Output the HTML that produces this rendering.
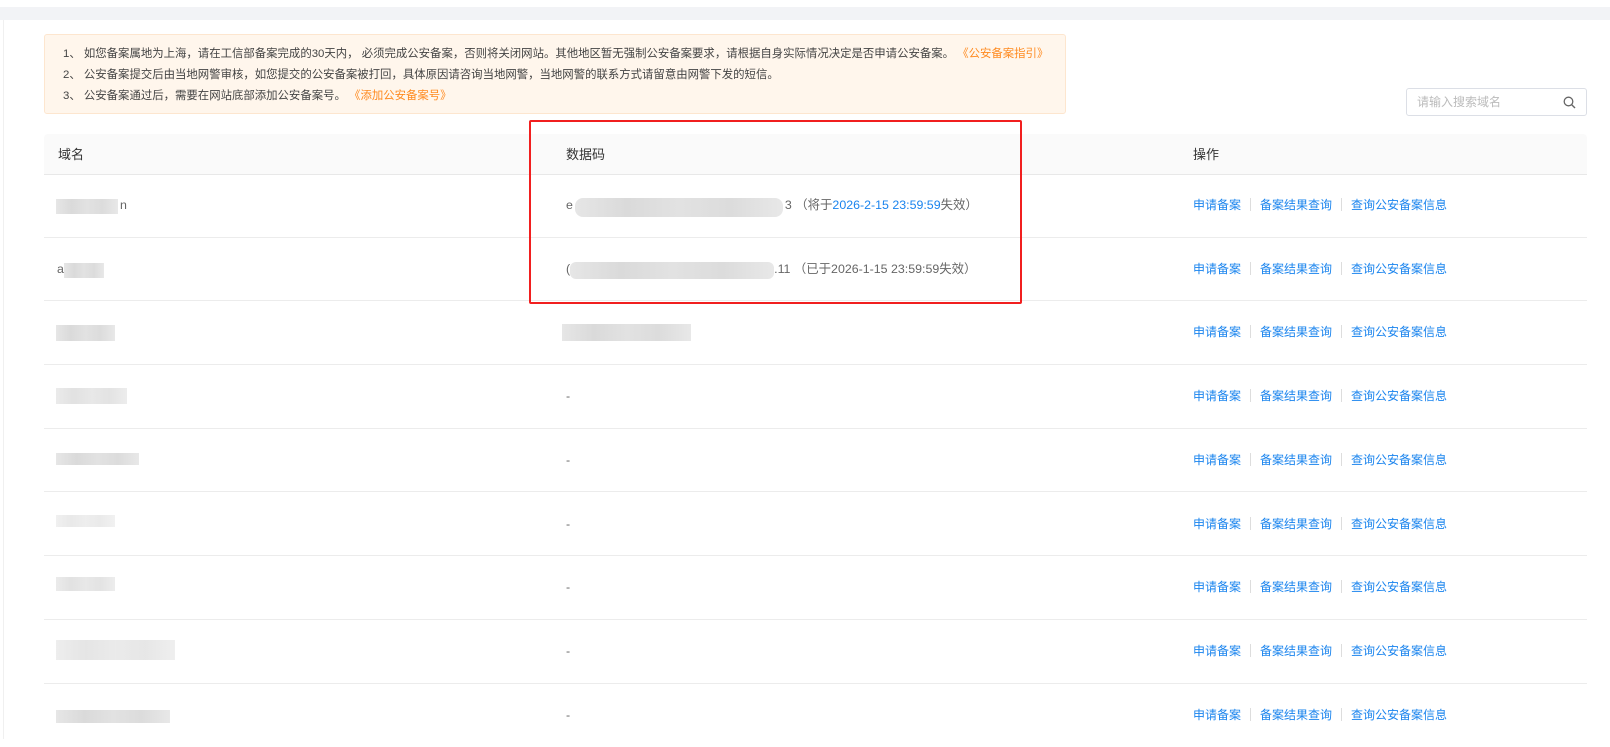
<!DOCTYPE html>
<html><head><meta charset="utf-8"><style>
*{margin:0;padding:0;box-sizing:border-box}
body{width:1610px;height:739px;overflow:hidden;background:#fff;font-family:"Liberation Sans","Noto Sans CJK SC",sans-serif;font-size:12px;color:#555;position:relative}
.band{position:absolute;left:0;top:7px;width:1610px;height:13px;background:#f2f3f6}
.card{position:absolute;left:3px;top:20px;width:1607px;height:719px;background:#fff;border-left:1px solid #f0f0f0}
.notice{position:absolute;left:44px;top:34px;width:1022px;height:80px;background:#fff6ec;border:1px solid #fde6cf;border-radius:3px;padding:9px 0 0 18px;line-height:21px;color:#444;font-size:11.4px;white-space:nowrap}
.notice b{font-weight:normal;color:#ff8a1f}
.search{position:absolute;left:1406px;top:88px;width:181px;height:28px;border:1px solid #dcdfe6;border-radius:3px;color:#bbb;padding-left:10px;line-height:26px}
.search svg{position:absolute;right:10px;top:7px}
.head{position:absolute;left:44px;top:134px;width:1543px;height:41px;background:#fafafa;border-bottom:1px solid #e8e8e8;border-radius:4px 4px 0 0;color:#333;font-size:13px}
.head span,.row>span{position:absolute;white-space:nowrap}
.row{position:absolute;left:44px;width:1543px;height:63.7px;border-bottom:1px solid #ececec}
.row .t{top:0;line-height:63px;color:#666;font-size:12.4px}
.ops{left:1149px;top:0;line-height:63px;color:#1a84ee}
.ops i{display:inline-block;width:1px;height:13px;background:#ddd;margin:0 9px;vertical-align:-2px}
.blur{position:absolute;background:linear-gradient(90deg,#e6e6e6,#dadada,#e2e2e2,#dcdcdc,#e8e8e8);height:15px}
.red{position:absolute;left:529px;top:120px;width:493px;height:184px;border:2px solid #f11f1f;border-radius:2px}
.blue{color:#1a84ee}
</style></head><body>
<div class="band"></div>
<div class="card"></div>
<div class="notice">
<div>1、 如您备案属地为上海，请在工信部备案完成的30天内， 必须完成公安备案，否则将关闭网站。其他地区暂无强制公安备案要求，请根据自身实际情况决定是否申请公安备案。 <b>《公安备案指引》</b></div>
<div>2、 公安备案提交后由当地网警审核，如您提交的公安备案被打回，具体原因请咨询当地网警，当地网警的联系方式请留意由网警下发的短信。</div>
<div>3、 公安备案通过后，需要在网站底部添加公安备案号。 <b>《添加公安备案号》</b></div>
</div>
<div class="search">请输入搜索域名<svg width="13" height="13" viewBox="0 0 13 13"><circle cx="5.5" cy="5.5" r="4.3" fill="none" stroke="#666" stroke-width="1.3"/><path d="M8.6 8.6L12 12" stroke="#666" stroke-width="1.4"/></svg></div>
<div class="head"><span style="left:14px;top:0;line-height:41px">域名</span><span style="left:522px;line-height:41px">数据码</span><span style="left:1149px;line-height:41px">操作</span></div>

<div class="row" style="top:174px"><span class="t" style="left:76px">n</span><span class="t" style="left:522px">e<span style="display:inline-block;width:212px"></span>3 （将于<span class="blue">2026-2-15 23:59:59</span>失效）</span><span class="ops">申请备案<i></i>备案结果查询<i></i>查询公安备案信息</span></div>
<div class="row" style="top:237.7px"><span class="t" style="left:13px">a</span><span class="t" style="left:522px">(<span style="display:inline-block;width:204px"></span>.11 （已于2026-1-15 23:59:59失效）</span><span class="ops">申请备案<i></i>备案结果查询<i></i>查询公安备案信息</span></div>
<div class="row" style="top:301.4px"><span class="ops">申请备案<i></i>备案结果查询<i></i>查询公安备案信息</span></div>
<div class="row" style="top:365.1px"><span class="t" style="left:522px">-</span><span class="ops">申请备案<i></i>备案结果查询<i></i>查询公安备案信息</span></div>
<div class="row" style="top:428.8px"><span class="t" style="left:522px">-</span><span class="ops">申请备案<i></i>备案结果查询<i></i>查询公安备案信息</span></div>
<div class="row" style="top:492.5px"><span class="t" style="left:522px">-</span><span class="ops">申请备案<i></i>备案结果查询<i></i>查询公安备案信息</span></div>
<div class="row" style="top:556.2px"><span class="t" style="left:522px">-</span><span class="ops">申请备案<i></i>备案结果查询<i></i>查询公安备案信息</span></div>
<div class="row" style="top:619.9px"><span class="t" style="left:522px">-</span><span class="ops">申请备案<i></i>备案结果查询<i></i>查询公安备案信息</span></div>
<div class="row" style="top:683.6px;border-bottom:none"><span class="t" style="left:522px">-</span><span class="ops">申请备案<i></i>备案结果查询<i></i>查询公安备案信息</span></div>

<div class="blur" style="left:56px;top:199px;width:62px"></div>
<div class="blur" style="left:575px;top:198px;width:208px;height:19px;border-radius:8px"></div>
<div class="blur" style="left:64px;top:263px;width:40px"></div>
<div class="blur" style="left:570px;top:262px;width:204px;height:17px;border-radius:6px"></div>
<div class="blur" style="left:56px;top:325px;width:59px;height:16px"></div>
<div class="blur" style="left:562px;top:324px;width:129px;height:17px"></div>
<div class="blur" style="left:56px;top:388px;width:71px;height:16px;opacity:.8"></div>
<div class="blur" style="left:56px;top:453px;width:83px;height:12px"></div>
<div class="blur" style="left:56px;top:515px;width:59px;height:12px;opacity:.6"></div>
<div class="blur" style="left:56px;top:577px;width:59px;height:14px;opacity:.8"></div>
<div class="blur" style="left:56px;top:640px;width:119px;height:20px;opacity:.7"></div>
<div class="blur" style="left:56px;top:710px;width:114px;height:13px"></div>
<div class="red"></div>
</body></html>
